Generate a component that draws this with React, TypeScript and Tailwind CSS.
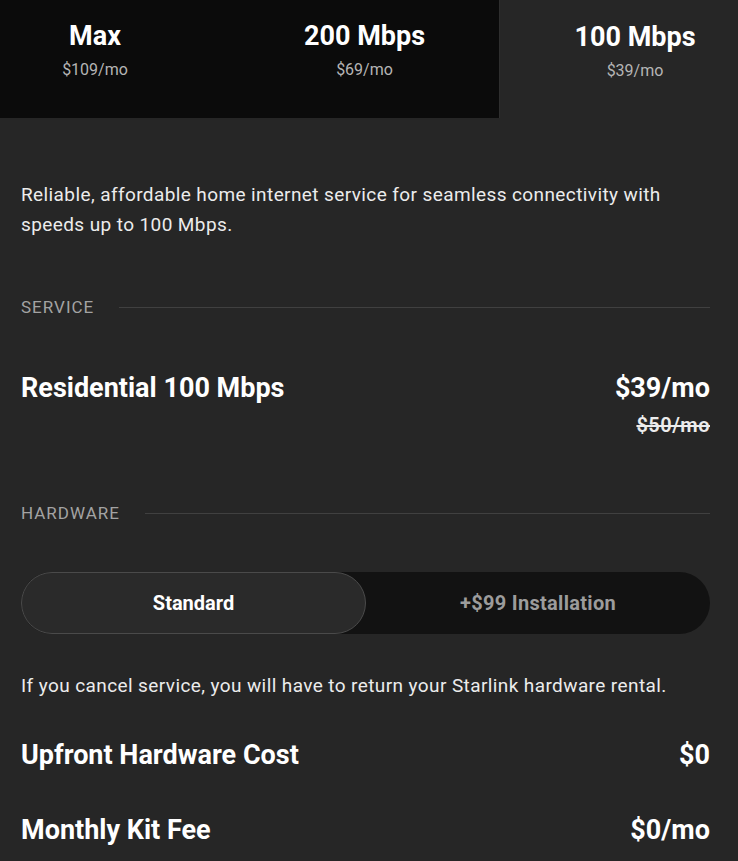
const TABS = [
  { name: "Max", price: "$109/mo" },
  { name: "200 Mbps", price: "$69/mo", divider: true },
  { name: "100 Mbps", price: "$39/mo", active: true },
]

function SectionLabel({ label }: { label: string }) {
  return (
    <div className="flex items-center gap-[25px]">
      <span className="text-[17px] tracking-[1px] text-[#a3a3a3]">{label}</span>
      <div className="h-px flex-1 bg-[#404040]" />
    </div>
  )
}

export default function App() {
  return (
    <div className="min-h-[861px] w-[738px] overflow-hidden bg-[#262626] text-white" style={{ fontFamily: "Roboto, 'Liberation Sans', sans-serif" }}>
      {/* Plan tabs, scrolled sideways */}
      <div className="overflow-hidden">
        <div className="-ml-[40px] flex">
          {TABS.map(tab => (
            <div
              key={tab.name}
              className={
                tab.active
                  ? "flex h-[118px] w-[270px] shrink-0 flex-col items-center pt-[20px]"
                  : tab.divider
                    ? "flex h-[118px] w-[270px] shrink-0 flex-col items-center border-r border-[#2e2e2e] bg-[#0b0b0b] pt-[19px]"
                    : "flex h-[118px] w-[270px] shrink-0 flex-col items-center bg-[#0b0b0b] pt-[19px]"
              }
            >
              <span className="text-[27px] font-bold leading-[34px]">{tab.name}</span>
              <span className="mt-[6px] text-[16px] leading-[22px] text-[#b5b5b5]">{tab.price}</span>
            </div>
          ))}
        </div>
      </div>

      <div className="pl-[21px] pr-[28px] pt-[62px]">
        <p className="text-[19px] leading-[30px] tracking-[0.4px] text-[#ececec]">
          Reliable, affordable home internet service for seamless connectivity with speeds up to 100 Mbps.
        </p>

        <div className="mt-[55px]">
          <SectionLabel label="SERVICE" />
        </div>

        <div className="mt-[50px] flex items-start justify-between">
          <span className="text-[27px] font-bold leading-[34px]">Residential 100 Mbps</span>
          <div className="flex flex-col items-end">
            <span className="text-[27px] font-bold leading-[34px]">$39/mo</span>
            <span className="mt-[7px] text-[20px] font-semibold leading-[26px] tracking-[0.5px] text-[#ececec] line-through">$50/mo</span>
          </div>
        </div>

        <div className="mt-[63px]">
          <SectionLabel label="HARDWARE" />
        </div>

        <div className="mt-[46px] flex h-[62px] rounded-full bg-[#121212]">
          <button className="flex h-full w-[345px] items-center justify-center rounded-full border border-[#4a4a4a] bg-[#2a2a2a] text-[20px] font-bold text-white">
            Standard
          </button>
          <button className="flex h-full flex-1 items-center justify-center text-[20px] font-bold tracking-[0.3px] text-[#9c9c9c]">
            +$99 Installation
          </button>
        </div>

        <p className="mt-[37px] text-[19px] leading-[30px] tracking-[0.4px] text-[#ececec]">
          If you cancel service, you will have to return your Starlink hardware rental.
        </p>

        <div className="mt-[37px] flex items-center justify-between">
          <span className="text-[27px] font-bold leading-[34px]">Upfront Hardware Cost</span>
          <span className="text-[27px] font-bold leading-[34px]">$0</span>
        </div>

        <div className="mt-[41px] flex items-center justify-between">
          <span className="text-[27px] font-bold leading-[34px]">Monthly Kit Fee</span>
          <span className="text-[27px] font-bold leading-[34px]">$0/mo</span>
        </div>
      </div>
    </div>
  )
}
